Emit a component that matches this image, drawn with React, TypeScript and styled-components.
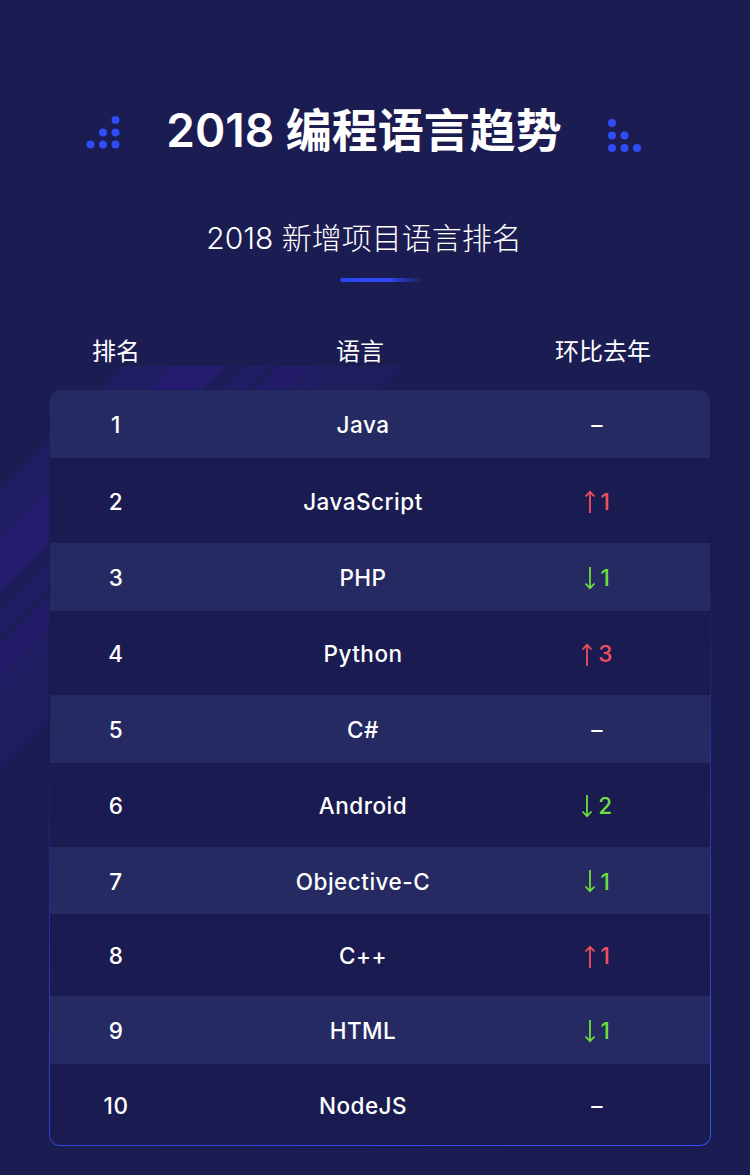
import React from "react";
import styled, { createGlobalStyle } from "styled-components";

const GlobalStyle = createGlobalStyle`
  html, body {
    margin: 0;
    padding: 0;
    background: #1b1c51;
  }
  body {
    font-family: Inter, "Noto Sans CJK SC", sans-serif;
    color: #ffffff;
  }
`;

const Page = styled.div`
  position: relative;
  width: 750px;
  height: 1175px;
  background: #1b1c51;
  overflow: hidden;
  display: flex;
  flex-direction: column;
`;

const Stripes = styled.svg`
  position: absolute;
  left: 0;
  top: 366px;
  z-index: 0;
`;

const Hero = styled.header`
  display: flex;
  flex-direction: column;
  align-items: center;
  padding: 104px 22px 0 0;
`;

const TitleRow = styled.div`
  display: flex;
  align-items: flex-start;
  gap: 46px;
  height: 52px;
`;

const Dots = styled.svg<{ $offset: number }>`
  margin-top: ${(p) => p.$offset}px;
  flex: none;
`;

const Title = styled.h1`
  margin: 0;
  font-family: Inter, "Noto Sans CJK SC", sans-serif;
  font-size: 46px;
  line-height: 52px;
  font-weight: 600;
  letter-spacing: 0;
  white-space: nowrap;
`;

const Subtitle = styled.h2`
  margin: 62px 0 0;
  font-family: Inter, "Noto Sans CJK SC", sans-serif;
  font-size: 30px;
  line-height: 40px;
  font-weight: 300;
  white-space: nowrap;
`;

const Underline = styled.div`
  margin: 20px 0 0 36px;
  width: 84px;
  height: 4px;
  border-radius: 2px;
  background: linear-gradient(90deg, #2a43ef 0%, #2e4cf8 55%, rgba(46, 76, 248, 0) 100%);
`;

const HeadRow = styled.div`
  position: relative;
  z-index: 1;
  margin: 55px 0 0 50px;
  width: 660px;
  display: grid;
  grid-template-columns: 132px 356px 130px;
  height: 30px;
  align-items: center;
`;

const HeadCell = styled.div`
  text-align: center;
  font-family: Inter, "Noto Sans CJK SC", sans-serif;
  font-size: 24px;
  line-height: 30px;
  font-weight: 400;
  color: #ffffff;
`;

const CardFrame = styled.div`
  position: relative;
  z-index: 1;
  margin: 22px 0 0 49px;
  width: 662px;
  padding: 1px;
  box-sizing: border-box;
  border-radius: 11px;
  background: linear-gradient(
    165deg,
    rgba(30, 30, 90, 0.6) 0%,
    rgba(22, 22, 70, 0.9) 35%,
    rgba(45, 70, 230, 0.6) 62%,
    #3553ff 100%
  );
`;

const Card = styled.div`
  border-radius: 10px;
  overflow: hidden;
  background: #1a1b50;
`;

const Row = styled.div<{ $light: boolean; $height: number }>`
  display: grid;
  grid-template-columns: 132px 362px 106px;
  align-items: center;
  height: ${(p) => p.$height}px;
  background: ${(p) => (p.$light ? "#252a62" : "#1a1b50")};
`;

const Cell = styled.div`
  display: flex;
  justify-content: center;
  align-items: center;
  padding-top: 2px;
  font-family: Inter, "Noto Sans CJK SC", sans-serif;
  font-size: 22.5px;
  font-weight: 500;
  letter-spacing: 0.5px;
  line-height: 28px;
  color: #ffffff;
  white-space: nowrap;
`;

const Change = styled.span<{ $color: string }>`
  display: inline-flex;
  align-items: center;
  gap: 5px;
  color: ${(p) => p.$color};
  font-size: 22.5px;
  font-weight: 500;
`;

const Arrow = styled.svg`
  display: block;
  flex: none;
`;

const UP = "#f0505c";
const DOWN = "#6fdd3b";

type Trend = { dir: "up" | "down" | "none"; n?: number };

const rows: { rank: number; lang: string; trend: Trend; h: number }[] = [
  { rank: 1, lang: "Java", trend: { dir: "none" }, h: 68 },
  { rank: 2, lang: "JavaScript", trend: { dir: "up", n: 1 }, h: 85 },
  { rank: 3, lang: "PHP", trend: { dir: "down", n: 1 }, h: 68 },
  { rank: 4, lang: "Python", trend: { dir: "up", n: 3 }, h: 84 },
  { rank: 5, lang: "C#", trend: { dir: "none" }, h: 68 },
  { rank: 6, lang: "Android", trend: { dir: "down", n: 2 }, h: 84 },
  { rank: 7, lang: "Objective-C", trend: { dir: "down", n: 1 }, h: 67 },
  { rank: 8, lang: "C++", trend: { dir: "up", n: 1 }, h: 82 },
  { rank: 9, lang: "HTML", trend: { dir: "down", n: 1 }, h: 68 },
  { rank: 10, lang: "NodeJS", trend: { dir: "none" }, h: 81 },
];

function TrendCell({ t }: { t: Trend }) {
  if (t.dir === "none") return <Cell>–</Cell>;
  const color = t.dir === "up" ? UP : DOWN;
  return (
    <Cell>
      <Change $color={color}>
        <Arrow width="12" height="23" viewBox="0 0 12 23">
          {t.dir === "up" ? (
            <g stroke={color} strokeWidth="1.8" fill="none">
              <line x1="6" y1="2" x2="6" y2="23" />
              <polyline points="1.5,6.5 6,1.8 10.5,6.5" />
            </g>
          ) : (
            <g stroke={color} strokeWidth="1.8" fill="none">
              <line x1="6" y1="0" x2="6" y2="21" />
              <polyline points="1.5,16.5 6,21.2 10.5,16.5" />
            </g>
          )}
        </Arrow>
        {t.n}
      </Change>
    </Cell>
  );
}

const DOT = "#2f4cf7";

export default function App() {
  return (
    <>
      <GlobalStyle />
      <Page>
        <Stripes width="430" height="405" viewBox="0 0 430 405">
          <polygon points="120,0 405,0 0,405 -285,405" fill="#1e1d5b" />
          <polygon points="127,0 173,0 -232,405 -278,405" fill="#211d64" />
          <polygon points="173,0 225,0 -180,405 -232,405" fill="#251b6f" />
          <polygon points="248,0 268,0 -137,405 -157,405" fill="#211d66" />
          <polygon points="280,0 310,0 -95,405 -125,405" fill="#231c6a" />
          <polygon points="310,0 334,0 -71,405 -95,405" fill="#211d63" />
          <polygon points="334,0 400,0 -5,405 -71,405" fill="#1f1d5e" />
        </Stripes>
        <Hero>
          <TitleRow>
            <Dots $offset={12} width="34" height="33" viewBox="0 0 34 33">
              <circle cx="29.5" cy="4" r="4" fill={DOT} />
              <circle cx="17" cy="16.5" r="4" fill={DOT} />
              <circle cx="29.5" cy="16.5" r="4" fill={DOT} />
              <circle cx="4.5" cy="28.5" r="4" fill={DOT} />
              <circle cx="17" cy="28.5" r="4" fill={DOT} />
              <circle cx="29.5" cy="28.5" r="4" fill={DOT} />
            </Dots>
            <Title>2018 编程语言趋势</Title>
            <Dots $offset={15} width="34" height="33" viewBox="0 0 34 33">
              <circle cx="4" cy="4" r="4" fill={DOT} />
              <circle cx="4" cy="16.5" r="4" fill={DOT} />
              <circle cx="16.5" cy="16.5" r="4" fill={DOT} />
              <circle cx="4" cy="29" r="4" fill={DOT} />
              <circle cx="16.5" cy="29" r="4" fill={DOT} />
              <circle cx="29" cy="29" r="4" fill={DOT} />
            </Dots>
          </TitleRow>
          <Subtitle>2018 新增项目语言排名</Subtitle>
          <Underline />
        </Hero>
        <HeadRow>
          <HeadCell>排名</HeadCell>
          <HeadCell>语言</HeadCell>
          <HeadCell>环比去年</HeadCell>
        </HeadRow>
        <CardFrame>
          <Card>
            {rows.map((r, i) => (
              <Row key={r.rank} $light={i % 2 === 0} $height={r.h}>
                <Cell>{r.rank}</Cell>
                <Cell>{r.lang}</Cell>
                <TrendCell t={r.trend} />
              </Row>
            ))}
          </Card>
        </CardFrame>
      </Page>
    </>
  );
}
